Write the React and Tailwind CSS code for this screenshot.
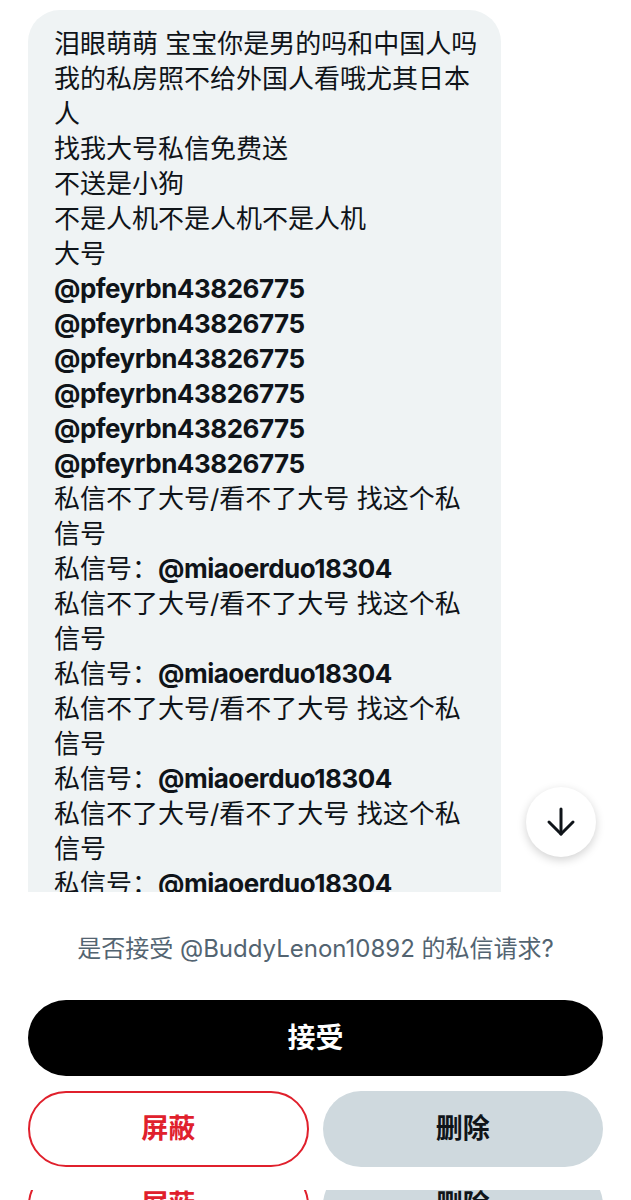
import React from "react";

const H = ({ children }) => <span className="font-bold tracking-[-0.5px]">{children}</span>;

function Buttons() {
  return (
    <div className="grid grid-cols-2 gap-[14px]">
      <button className="h-[76px] rounded-full border-2 border-[#e0202c] bg-white text-[#e0202c] text-[27px] font-bold flex items-center justify-center">
        屏蔽
      </button>
      <button className="h-[76px] rounded-full bg-[#cfd9de] text-[#0f1419] text-[27px] font-bold flex items-center justify-center">
        删除
      </button>
    </div>
  );
}

export default function App() {
  const block = [];
  for (let i = 0; i < 6; i++) {
    block.push(<div key={"b" + i}>私信不了大号/看不了大号 找这个私信号</div>);
    block.push(
      <div key={"c" + i}>
        私信号：<H>@miaoerduo18304</H>
      </div>
    );
  }
  return (
    <div className="w-[631px] h-[1200px] bg-white overflow-hidden text-[#0f1419] font-['Inter','Noto_Sans_CJK_SC',sans-serif]">
      <div className="h-[892px] overflow-hidden relative">
        <div className="ml-[28px] mt-[10px] w-[473px] bg-[#eff3f4] rounded-[32px] pl-[26px] pr-[19px] pt-[16px] pb-[16px] text-[26px] leading-[35px]">
          <div>泪眼萌萌 宝宝你是男的吗和中国人吗</div>
          <div>我的私房照不给外国人看哦尤其日本人</div>
          <div>找我大号私信免费送</div>
          <div>不送是小狗</div>
          <div>不是人机不是人机不是人机</div>
          <div>大号</div>
          <div><H>@pfeyrbn43826775</H></div>
          <div><H>@pfeyrbn43826775</H></div>
          <div><H>@pfeyrbn43826775</H></div>
          <div><H>@pfeyrbn43826775</H></div>
          <div><H>@pfeyrbn43826775</H></div>
          <div><H>@pfeyrbn43826775</H></div>
          {block}
        </div>
        <button className="absolute left-[526px] top-[787px] w-[70px] h-[70px] rounded-full bg-white shadow-[0_3px_10px_rgba(0,0,0,0.18)] flex items-center justify-center">
          <svg width="32" height="32" viewBox="0 0 32 32" fill="none" stroke="#0f1419" strokeWidth="3" strokeLinecap="round" strokeLinejoin="round">
            <path d="M16 3v25" />
            <path d="M4 16l12 12 12-12" />
          </svg>
        </button>
      </div>
      <div className="px-[28px]">
        <p className="mt-[40px] text-center text-[24px] leading-[34px] text-[#536471]">
          是否接受 @BuddyLenon10892 的私信请求?
        </p>
        <button className="mt-[34px] w-full h-[76px] rounded-full bg-black text-white text-[28px] font-bold flex items-center justify-center">
          接受
        </button>
        <div className="mt-[15px]">
          <Buttons />
        </div>
        <div className="mt-[23px] h-[20px] overflow-hidden">
          <div className="-mt-[23px]">
            <Buttons />
          </div>
        </div>
      </div>
    </div>
  );
}
